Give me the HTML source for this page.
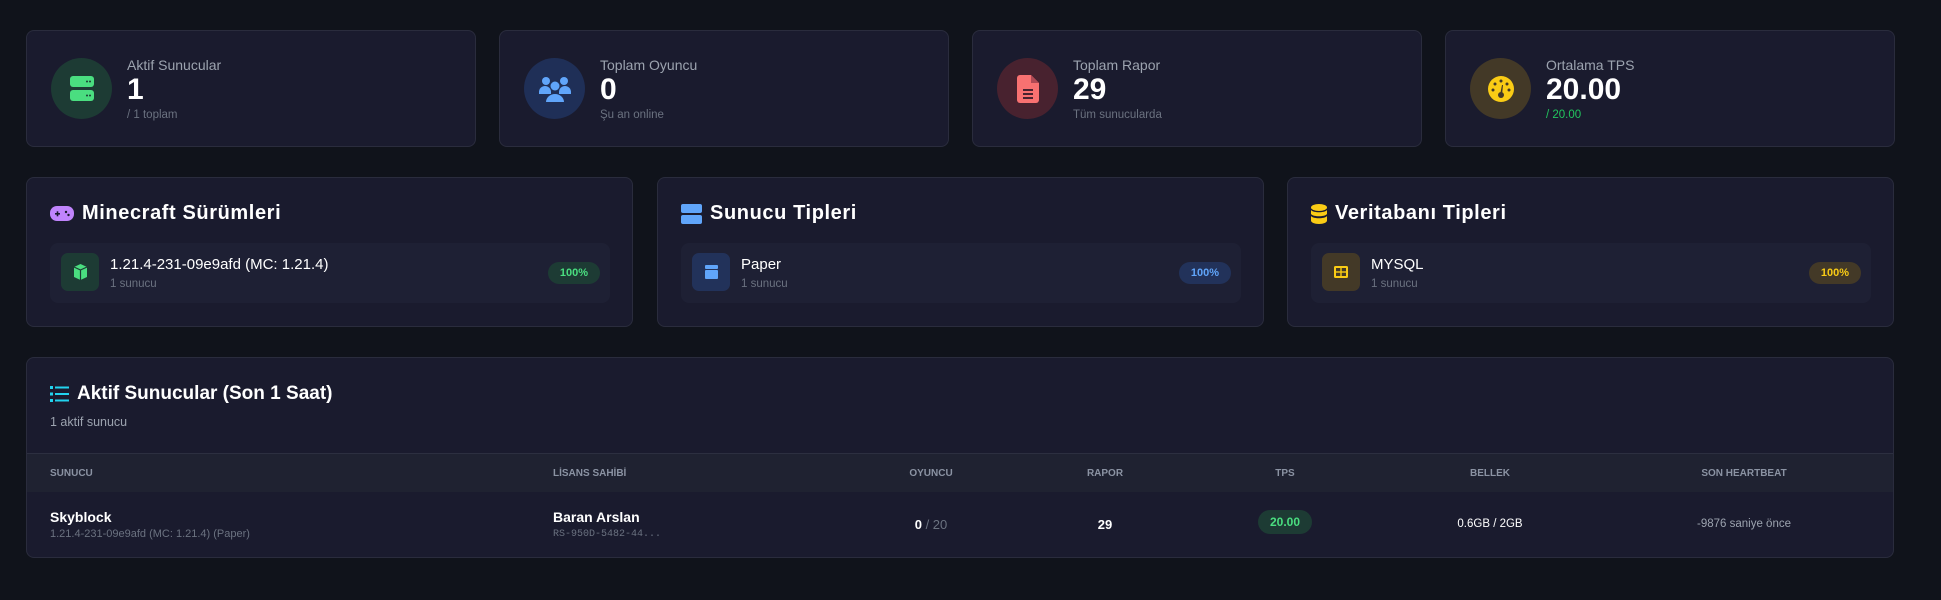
<!DOCTYPE html>
<html><head><meta charset="utf-8"><style>
*{box-sizing:border-box;margin:0;padding:0}
body{width:1941px;height:600px;background:#10131b;font-family:"Liberation Sans",sans-serif;color:#fff;position:relative;overflow:hidden}
.card{position:absolute;background:#1a1b2e;border:1px solid #2a2c3d;border-radius:8px}
.stat{top:30px;height:117px;width:450px}
.circ{position:absolute;left:24px;top:27px;width:61px;height:61px;border-radius:50%;display:flex;align-items:center;justify-content:center}
.lab{position:absolute;left:100px;top:26px;font-size:14px;color:#9ca3af}
.val{position:absolute;left:100px;top:42px;font-size:30px;font-weight:bold}
.sub{position:absolute;left:100px;top:78px;font-size:11.5px;color:#6b7280}
.mid{top:177px;height:150px;width:607px}
.ttl{position:absolute;left:23px;top:24px;font-size:19px;font-weight:bold;display:flex;align-items:center;gap:8px}
.mid .ttl{font-size:20px;letter-spacing:0.6px}
.item{position:absolute;left:23px;top:65px;right:22px;height:60px;background:#1e2034;border-radius:8px}
.ic{position:absolute;left:11px;top:10px;width:38px;height:38px;border-radius:7px;display:flex;align-items:center;justify-content:center}
.in{position:absolute;left:60px;top:13px;font-size:15px}
.is{position:absolute;left:60px;top:35px;font-size:11.5px;color:#6b7280}
.pill{position:absolute;right:10px;top:19px;width:52px;height:22px;border-radius:11px;font-size:11px;font-weight:bold;display:flex;align-items:center;justify-content:center}
.hd{position:absolute;top:95px;left:0;right:0;height:39px;background:#1f2231;border-top:1px solid #2c2f40}
.h{position:absolute;top:14px;font-size:10px;font-weight:bold;color:#8b93a3;transform:translateX(-50%)}
.c{position:absolute;transform:translateX(-50%);font-size:13px}
</style></head><body>

<div class="card stat" style="left:26px"><div class="circ" style="background:#1d3b34"><svg width="24" height="26" viewBox="0 0 24 26"><rect x="0" y="0" width="24" height="11" rx="3" fill="#4ade80"/><rect x="0" y="14" width="24" height="11" rx="3" fill="#4ade80"/><circle cx="17" cy="5.5" r="1" fill="#1d3b34"/><circle cx="20" cy="5.5" r="1" fill="#1d3b34"/><circle cx="17" cy="19.5" r="1" fill="#1d3b34"/><circle cx="20" cy="19.5" r="1" fill="#1d3b34"/></svg></div><div class="lab">Aktif Sunucular</div><div class="val">1</div><div class="sub">/ 1 toplam</div></div>

<div class="card stat" style="left:499px"><div class="circ" style="background:#1f2f57"><svg width="32" height="26" viewBox="0 0 32 26"><g fill="#60a5fa"><circle cx="7" cy="5" r="4"/><circle cx="25" cy="5" r="4"/><circle cx="16" cy="10" r="4.5"/><path d="M0 16a6 6 0 0 1 12 0v2H0z"/><path d="M20 16a6 6 0 0 1 12 0v2H20z"/><path d="M7 26a9 8 0 0 1 18 0z"/></g></svg></div><div class="lab">Toplam Oyuncu</div><div class="val">0</div><div class="sub">Şu an online</div></div>

<div class="card stat" style="left:972px"><div class="circ" style="background:#48222f"><svg width="22" height="28" viewBox="0 0 22 28"><path d="M3 0h11l8 8v17a3 3 0 0 1-3 3H3a3 3 0 0 1-3-3V3a3 3 0 0 1 3-3z" fill="#f87171"/><path d="M14 0v8h8z" fill="#b04a55"/><rect x="6" y="14" width="10" height="2" fill="#48222f"/><rect x="6" y="18" width="10" height="2" fill="#48222f"/><rect x="6" y="22" width="10" height="2" fill="#48222f"/></svg></div><div class="lab">Toplam Rapor</div><div class="val">29</div><div class="sub">Tüm sunucularda</div></div>

<div class="card stat" style="left:1445px"><div class="circ" style="background:#433927"><svg width="26" height="26" viewBox="0 0 26 26"><circle cx="13" cy="13" r="13" fill="#facc15"/><g fill="#433927"><circle cx="13" cy="5" r="1.5"/><circle cx="7" cy="8" r="1.5"/><circle cx="5" cy="14" r="1.5"/><circle cx="21" cy="14" r="1.5"/><circle cx="19" cy="8" r="1.5"/><circle cx="13" cy="19" r="3"/><path d="M12 19l2-10 1 0-1 10z"/></g></svg></div><div class="lab">Ortalama TPS</div><div class="val">20.00</div><div class="sub" style="color:#22c55e">/ 20.00</div></div>

<div class="card mid" style="left:26px"><div class="ttl"><svg width="24" height="15" viewBox="0 0 24 15"><rect width="24" height="15" rx="7" fill="#c084fc"/><rect x="5" y="7" width="5" height="1.6" fill="#1a1b2e"/><rect x="6.7" y="5.3" width="1.6" height="5" fill="#1a1b2e"/><circle cx="16" cy="6" r="1.2" fill="#1a1b2e"/><circle cx="18.5" cy="9" r="1.2" fill="#1a1b2e"/></svg>Minecraft Sürümleri</div><div class="item"><div class="ic" style="background:#1d3b34"><svg width="13" height="16" viewBox="0 0 13 16"><path d="M6.5 0L13 3v10l-6.5 3L0 13V3z" fill="#4ade80"/><path d="M6.5 6L13 3M6.5 6L0 3M6.5 6v10" stroke="#1d3b34" stroke-width="1.2" fill="none"/></svg></div><div class="in">1.21.4-231-09e9afd (MC: 1.21.4)</div><div class="is">1 sunucu</div><div class="pill" style="background:#1d3b34;color:#4ade80">100%</div></div></div>

<div class="card mid" style="left:657px"><div class="ttl"><svg width="21" height="20" viewBox="0 0 21 20"><rect width="21" height="9" rx="2" fill="#60a5fa"/><rect y="11" width="21" height="9" rx="2" fill="#60a5fa"/></svg>Sunucu Tipleri</div><div class="item"><div class="ic" style="background:#22325a"><svg width="13" height="14" viewBox="0 0 13 14"><rect y="0" width="13" height="4" rx="1" fill="#60a5fa"/><rect y="5" width="13" height="9" rx="1" fill="#60a5fa"/></svg></div><div class="in">Paper</div><div class="is">1 sunucu</div><div class="pill" style="background:#22325a;color:#60a5fa">100%</div></div></div>

<div class="card mid" style="left:1287px"><div class="ttl"><svg width="16" height="20" viewBox="0 0 16 20"><g fill="#facc15"><ellipse cx="8" cy="3.5" rx="8" ry="3.5"/><path d="M0 6c2 3 14 3 16 0v4c-2 3-14 3-16 0z"/><path d="M0 12c2 3 14 3 16 0v4.5c0 2-3.5 3.5-8 3.5s-8-1.5-8-3.5z"/></g></svg>Veritabanı Tipleri</div><div class="item"><div class="ic" style="background:#433927"><svg width="14" height="12" viewBox="0 0 14 12"><rect width="14" height="12" rx="1.5" fill="#facc15"/><g fill="#433927"><rect x="2" y="2" width="4.3" height="3.3"/><rect x="7.7" y="2" width="4.3" height="3.3"/><rect x="2" y="6.7" width="4.3" height="3.3"/><rect x="7.7" y="6.7" width="4.3" height="3.3"/></g></svg></div><div class="in">MYSQL</div><div class="is">1 sunucu</div><div class="pill" style="background:#433927;color:#facc15">100%</div></div></div>

<div class="card" style="left:26px;top:357px;width:1868px;height:201px">
<div class="ttl" style="top:25px"><svg width="19" height="16" viewBox="0 0 19 16"><g fill="#22d3ee"><rect width="3" height="3"/><rect y="6.5" width="3" height="3"/><rect y="13" width="3" height="3"/><rect x="5" y="0.5" width="14" height="2"/><rect x="5" y="7" width="14" height="2"/><rect x="5" y="13.5" width="14" height="2"/></g></svg>Aktif Sunucular (Son 1 Saat)</div>
<div style="position:absolute;left:23px;top:57px;font-size:12.5px;color:#9ca3af">1 aktif sunucu</div>
<div class="hd">
<div class="h" style="left:23px;transform:none">SUNUCU</div>
<div class="h" style="left:526px;transform:none">LİSANS SAHİBİ</div>
<div class="h" style="left:904px">OYUNCU</div>
<div class="h" style="left:1078px">RAPOR</div>
<div class="h" style="left:1258px">TPS</div>
<div class="h" style="left:1463px">BELLEK</div>
<div class="h" style="left:1717px">SON HEARTBEAT</div>
</div>
<div style="position:absolute;left:23px;top:151px;font-size:14px;font-weight:bold">Skyblock</div>
<div style="position:absolute;left:23px;top:170px;font-size:11px;color:#6b7280">1.21.4-231-09e9afd (MC: 1.21.4) (Paper)</div>
<div style="position:absolute;left:526px;top:151px;font-size:14px;font-weight:bold">Baran Arslan</div>
<div style="position:absolute;left:526px;top:171px;font-size:10px;color:#6b7280;font-family:'Liberation Mono',monospace">RS-950D-5482-44...</div>
<div class="c" style="left:904px;top:159px"><b>0</b> <span style="color:#6b7280">/ 20</span></div>
<div class="c" style="left:1078px;top:159px;font-weight:bold">29</div>
<div class="c" style="left:1258px;top:152px;background:#1d3b34;color:#4ade80;border-radius:12px;width:54px;height:24px;font-size:12px;font-weight:bold;display:flex;align-items:center;justify-content:center">20.00</div>
<div class="c" style="left:1463px;top:160px;font-size:11.5px">0.6GB / 2GB</div>
<div class="c" style="left:1717px;top:160px;font-size:11.5px;color:#9ca3af">-9876 saniye önce</div>
</div>
</body></html>
